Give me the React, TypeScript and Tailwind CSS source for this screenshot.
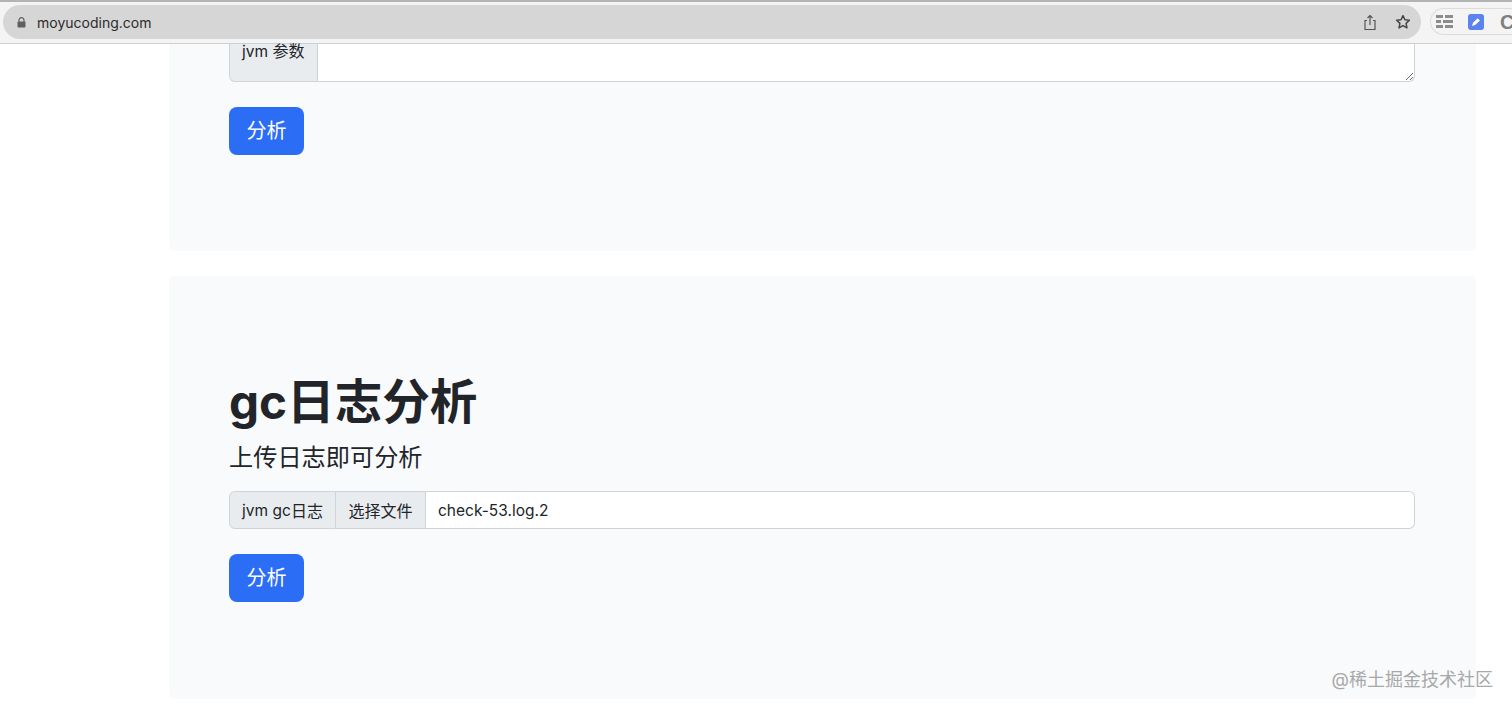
import React from 'react';

const AnalyzeButton = () => (
  <button type="button" className="w-[75px] h-[48px] rounded-lg bg-[#2b6ef5] text-white text-[20px] leading-none">
    分析
  </button>
);

const TopBar = () => (
  <div className="h-[44px] shrink-0 bg-[#f4f4f4] border-t-[2px] border-t-[#b4b4b4] border-b border-b-[#cfcfcf] flex items-start pt-[3px] pl-[3px] overflow-hidden">
    <div className="w-[1418px] h-[34px] rounded-full bg-[#d6d6d6] flex items-center shrink-0">
      <svg className="ml-[14px]" width="9" height="11" viewBox="0 0 9 11">
        <path d="M2 5V3.2a2.5 2.5 0 0 1 5 0V5" fill="none" stroke="#5f5f5f" strokeWidth="1.2" />
        <rect x="0.5" y="4.6" width="8" height="6" rx="1" fill="#5f5f5f" />
      </svg>
      <span className="ml-[11px] text-[14px] text-[#2b2b2b]">moyucoding.com</span>
      <svg className="ml-auto" width="14" height="17" viewBox="0 0 14 17" fill="none" stroke="#555555" strokeWidth="1.2">
        <path d="M4 6.5H2v9h10v-9h-2" />
        <path d="M7 11V1.5M4.5 4L7 1.5 9.5 4" />
      </svg>
      <svg className="ml-[18px] mr-[10px]" width="16" height="16" viewBox="0 0 24 24" fill="none" stroke="#444444" strokeWidth="2.2" strokeLinejoin="round">
        <path d="M12 2.5l2.9 6.2 6.7.8-5 4.6 1.4 6.7L12 17.4l-6 3.4 1.4-6.7-5-4.6 6.7-.8z" />
      </svg>
    </div>
    <div className="ml-[9px] mt-[3px] h-[27px] grow rounded-l-full border border-r-0 border-[#dcdcdc] flex items-center pl-[5px]">
      <svg width="17" height="14" viewBox="0 0 17 14" fill="#8c8c8c">
        <rect x="0" y="0" width="7" height="3" />
        <rect x="9" y="0" width="8" height="3" />
        <rect x="0" y="5" width="5" height="3" />
        <rect x="7" y="5" width="10" height="3" />
        <rect x="0" y="10" width="7" height="3" />
        <rect x="9" y="10" width="8" height="3" />
      </svg>
      <div className="ml-[15px] w-[16px] h-[16px] rounded-[3px] bg-[#5b82ee] flex items-center justify-center">
        <svg width="10" height="10" viewBox="0 0 10 10" fill="white">
          <path d="M1 9l1-3.2L6.6 1.2 9 3.4 4.2 8z" />
        </svg>
      </div>
      <span className="ml-[16px] text-[20px] leading-none font-bold text-[#7f7f7f] font-['Liberation_Sans',sans-serif]">C</span>
    </div>
  </div>
);

export default function App() {
  return (
    <div className="relative h-[711px] overflow-hidden bg-white flex flex-col text-[16px] text-[#212529] font-['Inter','Noto_Sans_CJK_SC',sans-serif]">
      <TopBar />
      <div className="flex flex-col gap-[25px] pl-[169px] pr-[36px]">
        <div className="h-[207px] bg-[#f9fafc] rounded-b-[5px] pl-[60px] pr-[61px] flex flex-col">
          <div className="h-[38px] flex">
            <div className="w-[89px] bg-[#e9ecef] border border-t-0 border-[#ced4da] rounded-bl-[6px] pl-[12px] whitespace-nowrap leading-[14px]">
              <span className="text-[15.5px]">jvm</span> 参数
            </div>
            <textarea
              readOnly
              className="grow h-[38px] bg-white border border-t-0 border-l-0 border-[#ced4da] rounded-br-[6px] outline-none resize-y"
            />
          </div>
          <div className="mt-[25px]">
            <AnalyzeButton />
          </div>
        </div>
        <div className="h-[423px] bg-[#f9fafc] rounded-[5px] pt-[97px] pl-[60px] pr-[61px] flex flex-col">
          <h1 className="text-[47.6px] leading-[58px] font-bold">gc日志分析</h1>
          <p className="mt-[8px] text-[24.2px] leading-[38px]">上传日志即可分析</p>
          <div className="mt-[14px] h-[38px] flex">
            <div className="bg-[#e9ecef] border border-[#ced4da] rounded-l-[6px] w-[107px] flex items-center justify-center whitespace-nowrap pt-px">
              <span className="text-[15.5px]">jvm gc</span>日志
            </div>
            <div className="bg-[#e9ecef] border border-l-0 border-[#ced4da] w-[90px] flex items-center justify-center pt-px">
              选择文件
            </div>
            <div className="grow bg-white border border-l-0 border-[#ced4da] rounded-r-[6px] flex items-center pl-[12px] pt-px text-[15.5px]">
              check-53.log.2
            </div>
          </div>
          <div className="mt-[25px]">
            <AnalyzeButton />
          </div>
        </div>
      </div>
      <div className="absolute right-[19px] top-[668px] text-[18px] leading-[24px] text-[#a8a8a8]">@稀土掘金技术社区</div>
    </div>
  );
}
